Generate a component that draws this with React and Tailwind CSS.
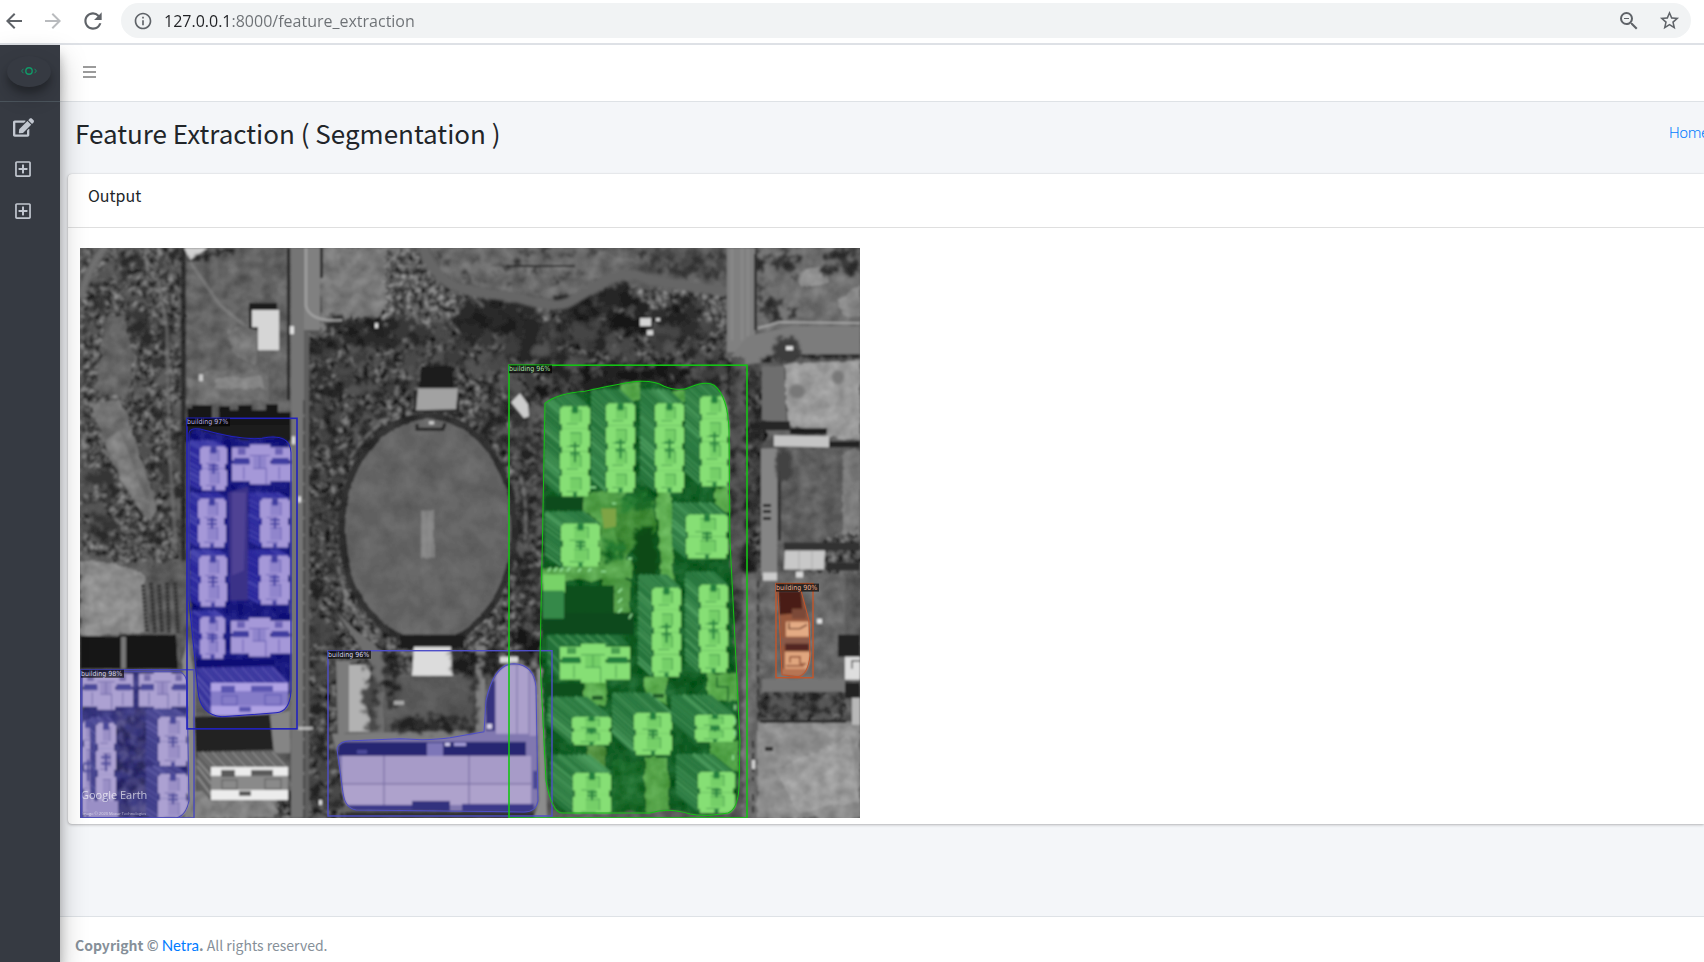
import React from "react";
import {
  MdArrowBack,
  MdArrowForward,
  MdRefresh,
  MdInfoOutline,
  MdZoomOut,
  MdStarBorder,
} from "react-icons/md";
import { FaEdit, FaRegPlusSquare } from "react-icons/fa";

/* ---------- seeded random numbers, so the drawing is always the same ---------- */
function makeRandom(seed) {
  let s = seed;
  return () => {
    s = (s * 1664525 + 1013904223) % 4294967296;
    return s / 4294967296;
  };
}

/* ---------- aerial photo pieces ---------- */

const P = ({ c, d, o = 1 }) => <polygon points={d} fill={c} opacity={o} />;
const R = ({ c, b, o = 1 }) => (
  <rect x={b[0]} y={b[1]} width={b[2] - b[0]} height={b[3] - b[1]} fill={c} opacity={o} />
);

function Scatter({ box, n, seed, min = 2, max = 6, colors }) {
  const rnd = makeRandom(seed);
  const dots = [];
  for (let i = 0; i < n; i++) {
    const x = box[0] + rnd() * (box[2] - box[0]);
    const y = box[1] + rnd() * (box[3] - box[1]);
    const r = min + rnd() * (max - min);
    const c = colors[Math.floor(rnd() * colors.length)];
    dots.push(<ellipse key={i} cx={x} cy={y} rx={r} ry={r * 0.85} fill={c} />);
  }
  return <g>{dots}</g>;
}

const GREEN = { light: "#86df75", mid: "#74cf68", line: "#4a9f50", slot: "#23803c", side: "#226f38", ray: "#57a868" };
const BLUE = { light: "#a598d8", mid: "#9085cc", line: "#6a60b4", slot: "#413ca0", side: "#26249a", ray: "#5250b4" };
const LILAC = { light: "#aca1d2", mid: "#9a8fc6", line: "#756caa", slot: "#4c489a", side: "#3e3c88", ray: "#6360a8" };

/* tower block seen from above, its side wall leaning to the upper left */
function Tower({ b, lean = [14, 10], t }) {
  const [x1, y1, x2, y2] = b;
  const w = x2 - x1;
  const h = y2 - y1;
  const [lx, ly] = lean;
  const mx = (x1 + x2) / 2;
  const rnd = makeRandom(Math.round(x1 * 7 + y1));
  const rays = [];
  for (let i = 2; i < h; i += 5) {
    rays.push(
      <line key={"l" + i} x1={x1 - lx} y1={y1 - ly + i} x2={x1} y2={y1 + i} strokeWidth={1 + rnd() * 3} opacity={0.2 + rnd() * 0.6} />
    );
  }
  for (let i = 2; i < w; i += 5) {
    rays.push(
      <line key={"t" + i} x1={x1 - lx + i} y1={y1 - ly} x2={x1 + i} y2={y1} strokeWidth={1 + rnd() * 3} opacity={0.2 + rnd() * 0.6} />
    );
  }
  const steps = Math.max(2, Math.round(h / 23));
  const sh = h / steps;
  const cells = [];
  for (let i = 0; i < steps; i++) {
    const y = y1 + i * sh;
    cells.push(
      <g key={i}>
        <rect x={x1} y={y + sh * 0.08} width={w} height={sh * 0.72} fill={t.light} />
        <rect x={x1 + 2} y={y} width={w - 4} height={sh} fill={t.light} />
        <rect x={mx - w * 0.16} y={y + sh * 0.2} width={w * 0.34} height={sh * 0.5} fill={t.mid} />
        <path
          d={`M${mx - w * 0.16} ${y + sh * 0.18}H${mx + w * 0.2}V${y + sh * 0.7}M${mx - w * 0.28} ${y + sh * 0.78}H${mx + w * 0.1}`}
          stroke={t.line}
          strokeWidth="1"
          fill="none"
        />
      </g>
    );
  }
  return (
    <g>
      <polygon
        points={`${x1 - lx},${y1 - ly} ${x2 - lx},${y1 - ly} ${x2},${y1} ${x2},${y1 + 6} ${x1},${y2} ${x1 - lx},${y2 - ly}`}
        fill={t.side}
      />
      <g stroke={t.ray}>{rays}</g>
      {cells}
      <rect x={mx - 3} y={y1} width="6" height={Math.min(7, h * 0.16)} fill={t.slot} />
      <path
        d={`M${mx} ${y1 + h * 0.4}V${y1 + h * 0.62}M${mx - 5} ${y1 + h * 0.44}H${mx + 5}M${mx - 5} ${y1 + h * 0.52}H${mx + 5}`}
        stroke={t.slot}
        strokeWidth="2"
        fill="none"
      />
      <rect x={mx - 2} y={y2 - Math.min(4, h * 0.1)} width="4" height={Math.min(4, h * 0.1)} fill={t.slot} />
    </g>
  );
}

/* long, low block with a stepped roof line */
function WideBlock({ b, t }) {
  const [x1, y1, x2, y2] = b;
  const w = x2 - x1;
  const h = y2 - y1;
  return (
    <g>
      <rect x={x1} y={y1 + 3} width={w} height={h * 0.33} fill={t.light} />
      <rect x={x1 + w * 0.3} y={y1} width={w * 0.35} height={h} fill={t.light} />
      <rect x={x1} y={y1 + h * 0.48} width={w} height={h * 0.44} fill={t.light} />
      <rect x={x1 + 2} y={y1 + h * 0.34} width={w * 0.26} height={h * 0.16} fill={t.slot} />
      <rect x={x1 + w * 0.68} y={y1 + h * 0.34} width={w * 0.28} height={h * 0.16} fill={t.slot} />
      <rect x={x1 + w * 0.1} y={y1 + 4} width={w * 0.13} height={h * 0.16} fill={t.line} />
      <rect x={x1 + w * 0.73} y={y1 + 4} width={w * 0.13} height={h * 0.16} fill={t.line} />
      <rect x={x1 + w * 0.36} y={y1 + h * 0.3} width={w * 0.22} height={h * 0.3} fill={t.mid} />
      <path
        d={`M${x1 + w * 0.3} ${y1 + h * 0.28}H${x1 + w * 0.64}M${x1 + w * 0.36} ${y1 + h * 0.6}H${x1 + w * 0.58}V${y2}M${x1 + w * 0.2} ${y1 + h * 0.55}V${y1 + h * 0.88}M${x1 + w * 0.8} ${y1 + h * 0.55}V${y1 + h * 0.88}M${x1 + w * 0.47} ${y1 + h * 0.3}V${y1 + h * 0.6}`}
        stroke={t.line}
        strokeWidth="1"
        fill="none"
      />
    </g>
  );
}

/* slab block with a ribbed roof */
function SlabBlock({ x, y, roof, rib, wall, mid, pane }) {
  const ribs = [];
  for (let i = 0; i < 76; i += 5) {
    ribs.push(<line key={i} x1={x + i} y1={y} x2={x + 15 + i} y2={y + 16} opacity={i % 2 ? 0.9 : 0.4} />);
  }
  return (
    <g>
      <polygon points={`${x},${y} ${x + 76},${y - 2} ${x + 92},${y + 15} ${x + 14},${y + 16} ${x + 14},${y + 49} ${x},${y + 32}`} fill={roof} />
      <g stroke={rib} strokeWidth="2">
        {ribs}
        <path d={`M${x} ${y + 8}L${x + 14} ${y + 24}M${x} ${y + 14}L${x + 14} ${y + 32}M${x} ${y + 24}L${x + 14} ${y + 43}`} />
      </g>
      <rect x={x + 14} y={y + 15} width="77" height="9" fill={wall} />
      <rect x={x + 14} y={y + 24} width="77" height="16" fill={mid} />
      <rect x={x + 14} y={y + 38} width="77" height="10" fill={wall} />
      <g fill={pane}>
        <rect x={x + 24} y={y + 18} width="14" height="7" />
        <rect x={x + 54} y={y + 18} width="22" height="6" />
        <rect x={x + 42} y={y + 39} width="12" height="5" />
      </g>
      <g fill={mid} stroke={pane} strokeWidth="1">
        <rect x={x + 25} y={y + 28} width="15" height="9" />
        <rect x={x + 68} y={y + 27} width="16" height="10" />
      </g>
    </g>
  );
}

function Terrain() {
  return (
    <>
      <g filter="url(#ground)">
        <R c="#5a5a5a" b={[70, 238, 870, 827]} />
        <R c="#606060" b={[186, 248, 290, 405]} />
        <P c="#6d6d6d" d="212,370 268,372 268,400 186,405 190,380" />
        <P c="#888888" d="216,378 262,376 264,388 214,388" o="0.8" />
        <P c="#7c7c7c" d="228,330 250,322 258,330 256,365 232,352" o="0.7" />
        <P c="#767676" d="316,248 412,248 402,300 390,330 322,338" />
        <P c="#868686" d="80,560 112,562 145,575 148,632 80,636" />
        <P c="#8a8a8a" d="84,568 138,580 138,625 84,628" />
        <R c="#7d7d7d" b={[186, 790, 292, 817]} />
        <P c="#696969" d="430,248 590,248 640,262 610,280 560,300 500,290 450,280" />
        <P c="#6c6c6c" d="756,248 860,248 860,326 756,330" />
        <P c="#8f8f8f" d="798,272 824,266 828,284 800,286" />
        <P c="#868686" d="838,300 860,284 860,318 842,316" />
        <P c="#989898" d="784,364 860,360 860,440 825,436 788,424" />
        <R c="#8a8a8a" b={[756, 722, 860, 817]} />
        <P c="#a3a3a3" d="775,770 850,735 860,800 800,812" o="0.6" />
        <R c="#666666" b={[762, 570, 845, 680]} />
        <R c="#5c5c5c" b={[782, 450, 843, 538]} />
        <R c="#7a7a7a" b={[843, 450, 860, 538]} />
      </g>
      <g filter="url(#trees)">
        <P c="#464646" d="80,248 182,248 182,545 176,562 120,560 80,552" />
        <P c="#3c3c3c" d="306,330 345,345 340,420 345,817 306,817" />
        <P c="#3a3a3a" d="325,322 400,310 470,300 560,312 620,292 728,300 728,372 680,392 520,405 480,440 345,460 318,400" />
        <P c="#424242" d="340,400 520,400 545,440 545,700 500,660 345,680" />
        <P c="#3a3a3a" d="728,362 764,372 764,570 728,560" />
        <P c="#363636" d="754,692 845,692 843,718 756,716" />
        <P c="#505050" d="385,252 420,250 450,290 520,304 580,310 640,288 728,292 728,330 385,330" />
        <P c="#484848" d="820,538 860,532 860,570 800,574" />
        <P c="#333333" d="278,770 300,780 300,817 276,817" />
      </g>
      <g filter="url(#ragged)">
        <Scatter box={[84, 252, 178, 330]} n={55} seed={7} colors={["#2b2b2b", "#343434", "#545454", "#5c5c5c"]} />
        <Scatter box={[130, 300, 180, 545]} n={70} seed={17} min={3} max={7} colors={["#2c2c2c", "#383838", "#505050", "#5c5c5c"]} />
        <Scatter box={[84, 470, 120, 545]} n={35} seed={27} min={3} max={7} colors={["#2a2a2a", "#363636", "#545454"]} />
        <Scatter box={[310, 345, 342, 810]} n={150} seed={37} min={3} max={7} colors={["#242424", "#2e2e2e", "#424242", "#484848"]} />
        <Scatter box={[330, 322, 725, 345]} n={110} seed={47} min={4} max={9} colors={["#262626", "#383838", "#484848"]} />
        <Scatter box={[345, 345, 725, 395]} n={150} seed={57} min={3} max={9} colors={["#282828", "#3c3c3c", "#484848", "#525252"]} />
        <Scatter box={[330, 320, 400, 345]} n={26} seed={58} min={4} max={8} colors={["#1e1e1e", "#2c2c2c"]} />
        <Scatter box={[460, 300, 530, 330]} n={30} seed={68} min={5} max={9} colors={["#1e1e1e", "#2a2a2a"]} />
        <Scatter box={[555, 300, 700, 335]} n={55} seed={67} min={5} max={10} colors={["#191919", "#222222", "#2e2e2e", "#444444"]} />
        <Scatter box={[600, 285, 630, 305]} n={14} seed={69} min={4} max={8} colors={["#1c1c1c", "#262626"]} />
        <Scatter box={[540, 368, 735, 392]} n={70} seed={70} min={4} max={8} colors={["#181818", "#242424", "#444444"]} />
        <Scatter box={[430, 250, 600, 285]} n={45} seed={77} min={1} max={4} colors={["#333333", "#444444"]} />
        <Scatter box={[640, 250, 724, 278]} n={45} seed={87} min={2} max={6} colors={["#333333", "#444444"]} />
        <Scatter box={[756, 250, 800, 318]} n={46} seed={97} min={2} max={6} colors={["#2b2b2b", "#3b3b3b", "#787878"]} />
        <Scatter box={[825, 250, 860, 275]} n={20} seed={98} min={2} max={6} colors={["#2c2c2c", "#3c3c3c"]} />
        <Scatter box={[756, 694, 842, 716]} n={80} seed={117} min={2} max={5} colors={["#242424", "#303030", "#5a5a5a"]} />
        <Scatter box={[345, 405, 385, 460]} n={70} seed={127} min={2} max={5} colors={["#242424", "#303030", "#5a5a5a"]} />
        <Scatter box={[480, 400, 543, 450]} n={80} seed={137} min={2} max={5} colors={["#242424", "#303030", "#5a5a5a"]} />
        <Scatter box={[516, 440, 542, 650]} n={170} seed={147} min={2} max={5} colors={["#202020", "#303030", "#555555"]} />
      </g>
      <g filter="url(#ground)">
        <P c="#6e6e6e" d="92,404 122,398 136,440 145,470 158,508 150,524 122,482 104,446" />
        <P c="#626262" d="104,322 124,314 134,360 128,396 96,396" />
        <P c="#848484" d="104,440 120,430 134,470 146,500 132,498" o="0.6" />
      </g>

      <g fill="none" filter="url(#soft)">
        <path d="M106 246Q88 268 80 298" stroke="#6f6f6f" strokeWidth="8" />
        <path d="M157 274L167 330L169 440L176 550" stroke="#747474" strokeWidth="2.4" />
        <path d="M422 246Q434 286 476 292L520 298Q560 312 576 298L600 284Q626 268 650 280L728 292" stroke="#666666" strokeWidth="10" />
        <path d="M190 262L220 305L245 326" stroke="#969696" strokeWidth="1.4" />
      </g>
      <path d="M506 266H575" stroke="#222" strokeWidth="1.6" />
      <R c="#242424" b={[181, 248, 186, 560]} o="0.8" />
      <P c="#d0d0d0" d="184,248 208,248 190,260" />
      <path d="M190 261L214 254L236 249" stroke="#222" strokeWidth="5" fill="none" filter="url(#ragged)" />
      <P c="#1b1b1b" d="249,303 277,303 277,311 258,330 249,328" />
      <P c="#d6d6d6" d="252,310 279,310 279,350 258,350 258,327 252,327" />
      <path d="M187 440V408H192V405H212V440M219 440V406H230V410H238V405H252V410H266V404H278V412H291V440Z" fill="#191919" />
      <R c="#1b1b1b" b={[186, 424, 290, 442]} />

      <R c="#747474" b={[291, 248, 304, 817]} />
      <R c="#808080" b={[304, 248, 320, 330]} />
      <R c="#5e5e5e" b={[304, 330, 309, 817]} />
      <R c="#262626" b={[287, 248, 290, 400]} />
      <R c="#2b2b2b" b={[320, 248, 323, 278]} />
      <path d="M306 248V306Q310 322 342 320" stroke="#a0a0a0" strokeWidth="2.4" fill="none" />
      <path d="M304 400V817" stroke="#404040" strokeWidth="1.6" strokeDasharray="14 3" />
      <g fill="#e0e0e0">
        <rect x="290" y="326" width="4" height="8" />
        <rect x="292" y="436" width="3" height="8" />
        <rect x="298" y="496" width="3" height="6" />
        <rect x="298" y="726" width="15" height="3" opacity="0.7" />
        <rect x="319" y="799" width="3" height="5" />
        <rect x="375" y="323" width="3" height="5" />
        <rect x="199" y="374" width="4" height="7" opacity="0.8" />
      </g>

      <R c="#808080" b={[727, 248, 755, 352]} />
      <R c="#303030" b={[754, 254, 757, 330]} />
      <path d="M732 248V340M742 248V340M748 248V340" stroke="#969696" strokeWidth="1" />
      <P c="#7c7c7c" d="748,336 790,326 860,326 860,354 800,357 748,364 728,360" />
      <path d="M758 328L780 322L860 323" stroke="#a8a8a8" strokeWidth="1.6" fill="none" />
      <g filter="url(#ground)">
        <R c="#505050" b={[730, 358, 747, 817]} />
        <R c="#6a6a6a" b={[743, 560, 757, 817]} />
      </g>
      <g filter="url(#ragged)">
        <Scatter box={[730, 365, 737, 520]} n={36} seed={106} min={2} max={5} colors={["#262626", "#3a3a3a"]} />
        <Scatter box={[746, 372, 760, 535]} n={60} seed={107} min={3} max={6} colors={["#242424", "#303030", "#484848"]} />
        <Scatter box={[744, 548, 754, 568]} n={14} seed={108} min={3} max={7} colors={["#1e1e1e", "#2a2a2a"]} />
        <Scatter box={[730, 590, 738, 620]} n={12} seed={109} min={2} max={5} colors={["#2a2a2a"]} />
      </g>
      <path d="M762 362L775 356L860 355" stroke="#1e1e1e" strokeWidth="5" fill="none" filter="url(#ragged)" />
      <ellipse cx="786" cy="350" rx="14" ry="13" fill="#3c3c3c" filter="url(#ragged)" />
      <R c="#e0e0e0" b={[786, 346, 793, 350]} />
      <P c="#6e6e6e" d="762,366 784,366 786,422 762,420" />
      <ellipse cx="797" cy="391" rx="8" ry="7" fill="#787878" filter="url(#soft)" />
      <ellipse cx="838" cy="377" rx="6" ry="7" fill="#787878" filter="url(#soft)" />
      <R c="#262626" b={[760, 421, 790, 430]} />
      <R c="#1f1f1f" b={[790, 428, 827, 434]} />
      <P c="#c4c4c4" d="774,435 829,436 829,447 774,446" />
      <R c="#222" b={[829, 441, 860, 447]} />
      <R c="#858585" b={[761, 448, 777, 575]} />
      <R c="#333" b={[778, 470, 781, 540]} />
      <ellipse cx="784" cy="465" rx="9" ry="16" fill="#424242" filter="url(#ragged)" />
      <path d="M763 505H771M763 511H771M763 518H771" stroke="#222" strokeWidth="3" />
      <R c="#303030" b={[784, 542, 860, 550]} />
      <R c="#2d2d2d" b={[826, 562, 860, 570]} />
      <P c="#c8c8c8" d="785,550 825,550 824,569 784,569" />
      <path d="M799 550V569M812 550V569" stroke="#aaa" strokeWidth="1" />
      <R c="#cccccc" b={[763, 572, 777, 580]} />
      <R c="#d8d8d8" b={[796, 571, 803, 577]} />
      <R c="#e4e4e4" b={[817, 618, 822, 623]} />
      <R c="#232323" b={[838, 634, 860, 656]} />
      <path d="M845 656H860V679H845Z" fill="#dedede" />
      <path d="M852 668V660H860" stroke="#555" strokeWidth="1.4" fill="none" />
      <R c="#747474" b={[762, 678, 845, 691]} />
      <R c="#202020" b={[845, 682, 860, 697]} />
      <R c="#b8b8b8" b={[852, 697, 860, 724]} />
      <R c="#2a2a2a" b={[760, 719, 846, 722]} />
      <R c="#2a2a2a" b={[765, 746, 773, 750]} />
      <path d="M758 580V720M753 740V780M753 793V815" stroke="#333" strokeWidth="2" strokeDasharray="7 5" />
      <g fill="#d4d4d4">
        <rect x="752" y="759" width="3" height="9" />
        <rect x="640" y="318" width="11" height="8" />
        <rect x="647" y="330" width="6" height="5" />
        <rect x="656" y="318" width="4" height="3" />
      </g>

      {/* cricket ground */}
      <path d="M520 475Q528 500 525 540M350 458Q370 425 400 413M338 565Q346 610 378 640" stroke="#8a8a8a" strokeWidth="2" fill="none" strokeDasharray="10 2" filter="url(#soft)" />
      <g filter="url(#field)">
        <ellipse cx="428" cy="529" rx="90" ry="117" fill="#2e2e2e" />
        <ellipse cx="428" cy="529" rx="83" ry="110" fill="#636363" />
        <R c="#828282" b={[421, 510, 434, 558]} />
      </g>
      <path d="M424 512V556M430 512V556" stroke="#909090" strokeWidth="1" />
      <P c="#1c1c1c" d="421,366 452,366 454,390 419,390" />
      <P c="#2b2b2b" d="413,390 458,388 460,412 414,412" />
      <P c="#a2a2a2" d="418,388 458,388 456,409 416,410" />
      <path d="M417 424V429H443L445 423" stroke="#242424" strokeWidth="3" fill="none" />
      <R c="#d0d0d0" b={[429, 421, 434, 424]} />
      <P c="#cccccc" d="511,402 520,393 528,404 529,416 524,418" />

      {/* pavilion yard */}
      <P c="#6e6e6e" d="337,612 356,630 376,645 384,660 384,736 375,736 372,664" />
      <R c="#1c1c1c" b={[400, 634, 464, 648]} />
      <g filter="url(#field)">
        <R c="#575757" b={[384, 676, 476, 730]} />
      </g>
      <P c="#dcdcdc" d="414,646 451,646 453,675 412,675" />
      <R c="#808080" b={[476, 645, 485, 732]} />
      <P c="#7c7c7c" d="336,660 350,660 350,731 338,735" />
      <R c="#b2b2b2" b={[349, 664, 370, 731]} />
      <P c="#7c7c7c" d="332,733 500,729 500,745 336,748" />
      <g filter="url(#ragged)">
        <Scatter box={[366, 665, 375, 728]} n={22} seed={151} min={3} max={6} colors={["#303030", "#4a4a4a"]} />
        <Scatter box={[384, 655, 396, 705]} n={16} seed={152} min={3} max={6} colors={["#1e1e1e", "#333"]} />
        <Scatter box={[392, 718, 474, 730]} n={40} seed={153} min={2} max={6} colors={["#202020", "#2e2e2e"]} />
        <Scatter box={[455, 650, 476, 675]} n={22} seed={154} min={3} max={6} colors={["#1e1e1e", "#333"]} />
        <Scatter box={[470, 675, 476, 725]} n={14} seed={158} min={2} max={4} colors={["#303030", "#404040"]} />
        <Scatter box={[485, 650, 498, 672]} n={16} seed={155} min={3} max={6} colors={["#1e1e1e", "#333"]} />
        <Scatter box={[516, 630, 538, 655]} n={20} seed={156} min={3} max={7} colors={["#161616", "#2c2c2c"]} />
      </g>
      <R c="#d8d8d8" b={[500, 656, 518, 662]} />
      <R c="#a8a8a8" b={[394, 700, 404, 704]} />
      <P c="#8c8c8c" d="537,668 543,668 547,817 534,817 539,800" />
      <R c="#303030" b={[345, 811, 534, 817]} />

      {/* south-west corner */}
      <P c="#181818" d="80,635 118,636 120,634 176,634 178,668 80,668" />
      <R c="#777" b={[121, 636, 126, 668]} />
      <path d="M143 584L147 632M151 582L155 632M159 584L162 632M167 582L169 632M175 582L178 632" stroke="#303030" strokeWidth="4" strokeDasharray="3 1" />
      <P c="#888888" d="182,660 188,640 195,680 195,795 188,817 186,700" />
      <P c="#222222" d="194,716 270,714 274,752 196,756" />
      <P c="#858585" d="270,714 290,710 290,752 274,752" />
      <SlabBlock x={197} y={751} roof="#5f5f5f" rib="#8c8c8c" wall="#ececec" mid="#8a8a8a" pane="#5a5a5a" />
    </>
  );
}

const BLUE_MASK =
  "M189 433Q190 426 205 430Q240 440 262 438Q290 432 291 452L291 690Q290 711 276 712L222 716Q200 714 198 690L194 650L189 600Z";
const LILAC_MASK = "M82 671L180 671Q187 674 187 684L189 800Q186 815 176 817L82 817Z";
const HALL_MASK =
  "M337 748Q339 740 352 740L400 738Q430 740 450 737L484 731L486 700Q494 663 514 663Q534 664 536 686L538 800Q536 811 524 811L356 809Q345 807 343 792Z";
const GREEN_MASK =
  "M545 403Q558 393 585 391Q612 385 630 382Q652 379 664 386Q680 392 690 387Q706 380 714 385Q728 396 729 430L730 540L736 660L740 740L739 786Q738 808 728 812Q705 816 690 813Q668 806 650 812L562 812Q552 812 546 780L543 720L540 660L542 560L543 510Z";
const ORANGE_MASK = "M778 590L801 590L809 620L810 655Q808 674 798 676L782 674Z";

function BlueArea() {
  return (
    <g clipPath="url(#blueClip)">
      <path d={BLUE_MASK} fill="#17177e" filter="url(#ground)" />
      <P c="#3a3288" d="228,492 248,486 248,600 230,600" />
      <P c="#5a4a9a" d="232,492 246,492 244,570 232,575" o="0.7" />
      <Tower b={[200, 446, 227, 490]} t={BLUE} lean={[11, 6]} />
      <WideBlock b={[232, 444, 291, 484]} t={BLUE} />
      <Tower b={[198, 498, 226, 547]} t={BLUE} lean={[9, 6]} />
      <Tower b={[260, 498, 290, 547]} t={BLUE} lean={[11, 6]} />
      <Tower b={[199, 555, 227, 606]} t={BLUE} lean={[9, 6]} />
      <Tower b={[259, 555, 290, 604]} t={BLUE} lean={[11, 6]} />
      <Tower b={[200, 616, 225, 658]} t={BLUE} lean={[9, 6]} />
      <WideBlock b={[231, 617, 291, 656]} t={BLUE} />
      <R c="#0e0e74" b={[194, 659, 275, 672]} />
      <SlabBlock x={197} y={667} roof="#35319c" rib="#5752ae" wall="#afa2e4" mid="#857bc8" pane="#5a54b0" />
    </g>
  );
}

function LilacArea() {
  return (
    <g clipPath="url(#lilacClip)">
      <path d={LILAC_MASK} fill="#35337c" filter="url(#ground)" />
      <g filter="url(#ragged)">
        <Scatter box={[117, 710, 146, 815]} n={130} seed={201} min={2} max={4} colors={["#2c2a5c", "#44407c", "#5c5890", "#252360"]} />
      </g>
      <WideBlock b={[82, 670, 133, 709]} t={LILAC} />
      <WideBlock b={[139, 670, 189, 709]} t={LILAC} />
      <Tower b={[82, 720, 94, 817]} t={LILAC} lean={[2, 2]} />
      <Tower b={[96, 722, 116, 800]} t={LILAC} lean={[6, 6]} />
      <Tower b={[158, 716, 188, 765]} t={LILAC} lean={[12, 8]} />
      <Tower b={[158, 773, 188, 822]} t={LILAC} lean={[12, 8]} />
      <R c={LILAC.mid} b={[88, 800, 118, 817]} />
    </g>
  );
}

function HallArea() {
  return (
    <g clipPath="url(#hallClip)">
      <path d={HALL_MASK} fill="#8178b0" />
      <R c="#272672" b={[338, 741, 526, 755]} />
      <R c="#7d76b8" b={[427, 742, 443, 756]} />
      <R c="#a79bc8" b={[342, 755, 531, 783]} />
      <R c="#aea2cc" b={[342, 783, 531, 804]} />
      <path d="M384 755V806M469 755V806M342 783H531" stroke="#7b70a4" strokeWidth="1.2" />
      <R c="#3b398a" b={[346, 804, 412, 812]} />
      <R c="#33317e" b={[412, 800, 450, 812]} />
      <R c="#3b398a" b={[462, 803, 534, 812]} />
      <R c="#d8d2f4" b={[445, 742, 450, 745]} />
      <R c="#a9a2dc" b={[454, 742, 466, 745]} />
      <R c="#4c4a9a" b={[357, 749, 367, 753]} />
      <R c="#35337f" b={[486, 680, 495, 730]} />
      <R c="#aca0cc" b={[496, 664, 530, 733]} />
      <R c="#a094c4" b={[529, 672, 538, 735]} />
      <path d="M517 664V733M529 670V735" stroke="#8379ac" strokeWidth="1.2" />
      <R c="#4a4794" b={[533, 770, 538, 788]} />
      <R c="#d8d2ea" b={[487, 723, 492, 728]} />
    </g>
  );
}

function GreenArea() {
  return (
    <g clipPath="url(#greenClip)">
      <path d={GREEN_MASK} fill="#0f5c22" filter="url(#ground)" />
      <g filter="url(#ground)">
        <P c="#4f9c45" d="584,494 626,486 632,520 624,590 600,590 600,520 582,510" />
        <P c="#3f8a35" d="610,505 655,500 655,530 620,560" />
        <P c="#5dac50" d="655,486 672,486 674,592 662,592" />
        <P c="#58a84c" d="620,384 640,380 640,400 622,400" />
        <P c="#58a84c" d="670,390 684,388 684,404 672,400" />
        <R c="#5aa84c" b={[715, 486, 730, 512]} />
        <P c="#55a24a" d="542,568 632,560 632,578 542,582" />
        <R c="#4f9a45" b={[614, 580, 630, 620]} />
        <R c="#58a84b" b={[584, 680, 606, 705]} />
        <R c="#58a84b" b={[645, 676, 667, 702]} />
        <R c="#58a84b" b={[708, 672, 738, 700]} />
        <R c="#52a046" b={[645, 756, 668, 812]} />
        <R c="#4c8a3a" b={[588, 744, 605, 770]} />
        <R c="#4fa045" b={[710, 740, 738, 770]} />
        <R c="#1a6a2a" b={[612, 760, 644, 812]} />
      </g>
      <g filter="url(#ragged)">
        <Scatter box={[604, 540, 622, 558]} n={20} seed={301} min={2} max={5} colors={["#0e5a1e", "#257a30"]} />
        <Scatter box={[622, 490, 655, 508]} n={22} seed={302} min={2} max={5} colors={["#1a6a28", "#2c8236"]} />
        <P c="#084a16" d="634,530 652,526 658,560 662,590 636,590" />
      </g>
      <R c="#0a4c1a" b={[545, 496, 583, 510]} />
      <R c="#0b4f1c" b={[560, 585, 614, 612]} />
      <R c="#0a4a1a" b={[542, 612, 634, 634]} />
      <R c="#78d268" b={[543, 574, 565, 592]} />
      <R c="#36894a" b={[543, 590, 564, 618]} />
      <P c="#7ea445" d="601,508 616,508 616,526 604,528" />
      <R c="#0b4f1c" b={[545, 682, 583, 700]} />

      <Tower b={[560, 406, 590, 496]} t={GREEN} lean={[16, 14]} />
      <Tower b={[606, 403, 635, 492]} t={GREEN} lean={[15, 14]} />
      <Tower b={[655, 403, 684, 492]} t={GREEN} lean={[15, 14]} />
      <Tower b={[700, 396, 729, 486]} t={GREEN} lean={[15, 14]} />
      <Tower b={[561, 523, 600, 566]} t={GREEN} lean={[16, 12]} />
      <Tower b={[686, 514, 728, 558]} t={GREEN} lean={[14, 12]} />
      <Tower b={[652, 587, 681, 676]} t={GREEN} lean={[14, 13]} />
      <Tower b={[699, 584, 728, 672]} t={GREEN} lean={[14, 13]} />
      <P c="#226f38" d="547,634 618,634 630,644 560,646 560,680 547,664" />
      <path d="M548 636L562 650M556 634L568 644M566 634L578 644M576 634L588 644M586 634L598 644M596 634L608 644M606 634L618 644M548 650L562 664M548 660L562 676" stroke="#4b9c5c" strokeWidth="2.4" opacity="0.6" />
      <WideBlock b={[560, 643, 630, 682]} t={GREEN} />
      <Tower b={[572, 716, 611, 744]} t={GREEN} lean={[24, 20]} />
      <Tower b={[634, 712, 672, 754]} t={GREEN} lean={[22, 20]} />
      <Tower b={[695, 714, 735, 741]} t={GREEN} lean={[24, 20]} />
      <Tower b={[573, 772, 611, 816]} t={GREEN} lean={[22, 18]} />
      <Tower b={[698, 771, 735, 812]} t={GREEN} lean={[22, 18]} />
      <g stroke="#98e89c" strokeWidth="1.6">
        <path d="M548 571l3-4M554 571l3-4M560 571l3-4M567 571l3-4M578 571l3-3M588 571l3-3M601 571h5M618 592l4-4M618 602l4-4M618 612l4-4M629 618l3-5" />
        <path d="M590 487h6M612 503h4M628 558h4M735 704v5M735 718v5M735 730v5M733 754v5" />
      </g>
      <path d="M717 676V686H728V700" stroke="#1f6a2c" strokeWidth="1.6" fill="none" />
      <R c="#1a5a26" b={[592, 695, 603, 699]} />
      <R c="#1a5a26" b={[653, 693, 664, 697]} />
    </g>
  );
}

function OrangeArea() {
  return (
    <g clipPath="url(#orangeClip)">
      <path d={ORANGE_MASK} fill="#97583c" />
      <P c="#481d16" d="778,590 801,590 803,612 779,614" />
      <R c="#7c4a38" b={[792, 608, 806, 618]} />
      <R c="#e4ab84" b={[786, 621, 809, 636]} />
      <path d="M788 628H800L807 624M789 622V628" stroke="#6a3826" strokeWidth="1.4" fill="none" />
      <R c="#8a5a48" b={[780, 637, 810, 645]} />
      <R c="#532620" b={[785, 643, 809, 650]} />
      <R c="#e0a67e" b={[785, 651, 810, 672]} />
      <path d="M790 656H800V663H806M786 665H804M790 656V662" stroke="#8a4a30" strokeWidth="1.4" fill="none" />
      <R c="#b87452" b={[780, 668, 806, 676]} />
    </g>
  );
}

function Detection({ box, color, mask, label, width = 1.4 }) {
  const [x1, y1, x2, y2] = box;
  return (
    <g>
      <path d={mask} fill="none" stroke={color} strokeWidth="1" />
      <rect x={x1} y={y1} width={x2 - x1} height={y2 - y1} fill="none" stroke={color} strokeWidth={width} />
      <rect x={x1} y={y1} width="43" height="8" fill="#000" opacity="0.65" />
      <text x={x1} y={y1 + 6} fontSize="7" fill={label.color} fontFamily="'DejaVu Sans Condensed', 'DejaVu Sans', sans-serif">
        {label.text}
      </text>
    </g>
  );
}

const CLIPS = [
  ["blueClip", BLUE_MASK],
  ["lilacClip", LILAC_MASK],
  ["hallClip", HALL_MASK],
  ["greenClip", GREEN_MASK],
  ["orangeClip", ORANGE_MASK],
];

const GRAY_NOISE = "1 0 0 0 0 1 0 0 0 0 1 0 0 0 0 0 0 0 0 1";

/* adds grain to the shapes it is applied to and roughens their outlines */
function GrainFilter({ id, freq, seed, amount, bias, scale }) {
  return (
    <filter id={id} x="-5%" y="-5%" width="110%" height="110%" colorInterpolationFilters="sRGB">
      <feTurbulence type="fractalNoise" baseFrequency={freq} numOctaves="4" seed={seed} result="n" />
      <feColorMatrix in="n" values={GRAY_NOISE} result="g" />
      <feDisplacementMap in="SourceGraphic" in2="n" scale={scale} xChannelSelector="R" yChannelSelector="G" result="edge" />
      <feComposite in="g" in2="edge" operator="arithmetic" k1="0" k2={amount} k3="1" k4={bias} result="mix" />
      <feComposite in="mix" in2="edge" operator="in" />
    </filter>
  );
}

function SegmentedAerial() {
  return (
    <svg
      viewBox="80 248 780 569"
      preserveAspectRatio="none"
      className="block aspect-[780/570] w-[780px] max-w-full"
      role="img"
      aria-label="Segmented buildings"
    >
      <defs>
        <GrainFilter id="trees" freq="0.16" seed="5" amount="0.8" bias="-0.36" scale="18" />
        <GrainFilter id="ground" freq="0.08" seed="11" amount="0.22" bias="-0.1" scale="7" />
        <GrainFilter id="field" freq="0.05" seed="21" amount="0.13" bias="-0.06" scale="5" />
        <filter id="ragged" x="-5%" y="-5%" width="110%" height="110%" colorInterpolationFilters="sRGB">
          <feTurbulence type="fractalNoise" baseFrequency="0.2" numOctaves="3" seed="8" result="n" />
          <feDisplacementMap in="SourceGraphic" in2="n" scale="14" xChannelSelector="R" yChannelSelector="G" />
          <feGaussianBlur stdDeviation="0.9" />
        </filter>
        <filter id="soft">
          <feGaussianBlur stdDeviation="0.9" />
        </filter>
        <filter id="photo" x="0" y="0" width="100%" height="100%">
          <feGaussianBlur stdDeviation="0.8" />
        </filter>
        {CLIPS.map(([id, d]) => (
          <clipPath key={id} id={id}>
            <path d={d} />
          </clipPath>
        ))}
      </defs>
      <g filter="url(#photo)">
        <Terrain />
        <HallArea />
        <LilacArea />
        <BlueArea />
        <GreenArea />
        <OrangeArea />
      </g>
      <g fill="#ffffff" fontFamily="'Open Sans', sans-serif">
        <text x="81" y="798" fontSize="11" opacity="0.65">Google Earth</text>
        <text x="82" y="814" fontSize="4" opacity="0.6">Image © 2020 Maxar Technologies</text>
      </g>
      <Detection box={[81, 669, 194, 817]} color="#4848bc" mask={LILAC_MASK} label={{ text: "building 98%", color: "#d4d4ee" }} />
      <Detection box={[328, 650, 552, 815]} color="#4f4fc8" mask={HALL_MASK} label={{ text: "building 96%", color: "#d4d4ee" }} />
      <Detection box={[187, 418, 297, 728]} color="#2222c0" mask={BLUE_MASK} label={{ text: "building 97%", color: "#b8b0e8" }} width={1.6} />
      <Detection box={[509, 365, 747, 817]} color="#14c414" mask={GREEN_MASK} label={{ text: "building 96%", color: "#a8e0a8" }} width={1.6} />
      <Detection box={[776, 583, 813, 677]} color="#c4562a" mask={ORANGE_MASK} label={{ text: "building 90%", color: "#f0b090" }} />
    </svg>
  );
}

/* ---------- page ---------- */

function BrowserBar() {
  return (
    <div className="flex h-[45px] shrink-0 items-start border-b-2 border-[#dee1e6] bg-white pt-[3px] pr-[13px] pl-[2px] text-[#5f6368]">
      <div className="flex h-[35px] items-center gap-[15px]">
        <button type="button" aria-label="Back"><MdArrowBack size={24} /></button>
        <button type="button" aria-label="Forward" className="text-[#b9bbbe]"><MdArrowForward size={24} /></button>
        <button type="button" aria-label="Reload"><MdRefresh size={26} /></button>
      </div>
      <div className="ml-[15px] flex h-[35px] min-w-0 flex-1 items-center rounded-full bg-[#f1f3f4] pr-[10px] pl-[12px]">
        <button type="button" aria-label="Site information"><MdInfoOutline size={20} /></button>
        <input
          type="text"
          aria-label="Address"
          defaultValue="127.0.0.1:8000/feature_extraction"
          className="ml-[11px] h-[30px] min-w-0 flex-1 bg-linear-to-r from-[#202124] from-[64px] to-[#6c7074] to-[64px] bg-clip-text font-['Open_Sans',sans-serif] text-[16px] text-transparent outline-none"
        />
        <div className="flex items-center gap-[17px]">
          <button type="button" aria-label="Zoom out"><MdZoomOut size={24} /></button>
          <button type="button" aria-label="Bookmark"><MdStarBorder size={23} /></button>
        </div>
      </div>
    </div>
  );
}

function Sidebar() {
  return (
    <aside className="relative z-10 w-[60px] shrink-0 bg-[#363a42] text-[#c2c7d0] shadow-[0_14px_28px_rgba(0,0,0,0.25),0_10px_10px_rgba(0,0,0,0.22)]">
      <a href="#home" aria-label="Netra home" className="flex h-[57px] items-center border-b border-[#4b545c] pb-[4px] pl-[7px]">
        <span className="flex h-[31px] w-[44px] items-center justify-center rounded-[50%] bg-[#363a42] shadow-[0_10px_20px_rgba(0,0,0,0.19),0_6px_6px_rgba(0,0,0,0.23)]">
          <svg viewBox="0 0 18 10" className="h-[10px] w-[18px]" fill="none" stroke="#109a68">
            <circle cx="9" cy="5" r="3.2" strokeWidth="1.4" />
            <path d="M3.4 2.8L1.6 5l1.8 2.2M14.6 2.8L16.4 5l-1.8 2.2" strokeWidth="0.9" />
          </svg>
        </span>
      </a>
      <nav className="flex flex-col pt-[4px] pl-[13px]">
        <a href="#edit" aria-label="Edit" className="flex h-[42px] items-center"><FaEdit size={21} /></a>
        <a href="#add-1" aria-label="Add" className="flex h-[42px] items-center pl-[1px]"><FaRegPlusSquare size={18} /></a>
        <a href="#add-2" aria-label="Add another" className="flex h-[42px] items-center pl-[1px]"><FaRegPlusSquare size={18} /></a>
      </nav>
    </aside>
  );
}

export default function App() {
  return (
    <div className="flex h-screen flex-col overflow-hidden bg-white font-['Noto_Sans_CJK_SC',sans-serif] text-[#212529]">
      <BrowserBar />
      <div className="flex min-h-0 flex-1">
        <Sidebar />
        <div className="flex min-w-0 flex-1 flex-col">
          <header className="flex h-[57px] shrink-0 items-center border-b border-[#dee2e6] bg-white pb-[2px] pl-[23px]">
            <button type="button" aria-label="Toggle menu" className="text-[#7b7b7b]">
              <svg viewBox="0 0 13 12" className="h-[12px] w-[13px]" stroke="currentColor" strokeWidth="1.5">
                <path d="M0 1h13M0 6h13M0 11h13" />
              </svg>
            </button>
          </header>
          <main className="min-h-[814px] bg-[#f4f6f9] pl-[8px]">
            <div className="flex h-[72px] items-start justify-between pt-[13px] pl-[7px]">
              <h1 className="text-[26px] leading-[36px]">Feature Extraction ( Segmentation )</h1>
              <a href="#home" className="mt-[6px] w-[35px] overflow-hidden font-[Roboto,sans-serif] text-[15px] leading-[24px] font-light text-[#007bff]">Home</a>
            </div>
            <section className="rounded-l-[4px] bg-white shadow-[0_0_1px_rgba(0,0,0,0.2),0_1px_3px_rgba(0,0,0,0.25)]">
              <h2 className="h-[54px] border-b border-[#dfdfdf] pt-[9px] pl-[20px] text-[16px] leading-[24px]">Output</h2>
              <div className="pt-[20px] pb-[6px] pl-[12px]">
                <SegmentedAerial />
              </div>
            </section>
          </main>
          <footer className="shrink-0 border-t border-[#dee2e6] bg-white py-[16px] pl-[15px] text-[14px] leading-[24px] text-[#869099]">
            <strong>
              Copyright © <a href="#netra" className="font-[Lato,sans-serif] text-[15px] font-normal text-[#007bff]">Netra</a>.
            </strong>{" "}
            All rights reserved.
          </footer>
        </div>
      </div>
    </div>
  );
}
